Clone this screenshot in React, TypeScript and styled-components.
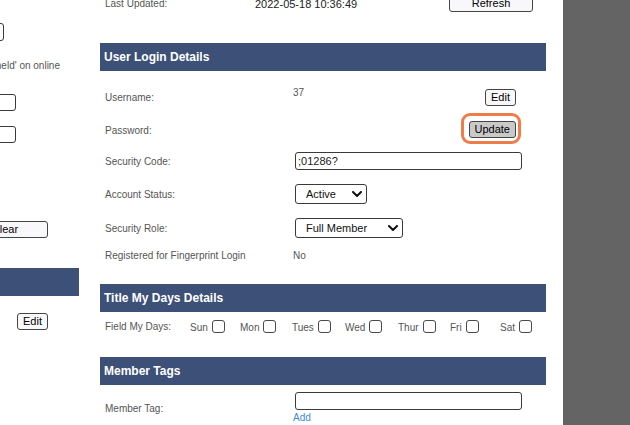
import React from "react";
import styled, { createGlobalStyle } from "styled-components";

const GlobalStyle = createGlobalStyle`
  html, body { margin: 0; padding: 0; background: #fff; }
  body { font-family: "Liberation Sans", Arial, sans-serif; overflow: hidden; }
`;

const Page = styled.div`
  display: flex;
  width: 630px;
  height: 425px;
  overflow: hidden;
`;

const Content = styled.div`
  flex: 0 0 563px;
  display: flex;
  gap: 21px;
  background: #fff;
  overflow: hidden;
`;

const SideGutter = styled.div`
  flex: 1;
  background: #646464;
`;

const LeftColumn = styled.div`
  flex: 0 0 79px;
  overflow: hidden;
  display: flex;
  justify-content: flex-end;
`;

const LeftInner = styled.div`
  flex: 0 0 220px;
  display: flex;
  flex-direction: column;
  align-items: flex-end;
`;

const Main = styled.div`
  flex: 0 0 446px;
  display: flex;
  flex-direction: column;
`;

const TopRow = styled.div`
  margin-top: -13px;
  height: 32px;
  display: grid;
  grid-template-columns: 150px 1fr auto;
  align-items: center;
  padding: 0 13px 0 5px;
`;

const Label = styled.span`
  font-size: 10px;
  line-height: 12px;
  padding-top: 2px;
  color: #555;
  white-space: nowrap;
`;

const ValueText = styled.span<{ $dark?: boolean; $size?: number }>`
  font-size: ${(p) => p.$size ?? 10}px;
  line-height: 12px;
  padding-top: 2px;
  color: ${(p) => (p.$dark ? "#222" : "#555")};
  white-space: nowrap;
`;

const Note = styled(Label)<{ $mt: number; $mr: number }>`
  margin-top: ${(p) => p.$mt}px;
  margin-right: ${(p) => p.$mr}px;
`;

const SectionHeader = styled.div<{ $mt: number }>`
  margin-top: ${(p) => p.$mt}px;
  height: 28px;
  flex: 0 0 28px;
  align-self: stretch;
  background: #3d5077;
  color: #fff;
  font-size: 12px;
  font-weight: bold;
  display: flex;
  align-items: center;
  padding-left: 4px;
  white-space: nowrap;
`;

const Button = styled.button<{ $pressed?: boolean; $width?: number; $mt?: number; $mr?: number }>`
  font-family: "Liberation Sans", Arial, sans-serif;
  font-size: 11px;
  line-height: 13px;
  color: #000;
  height: 17px;
  padding: 0 5px;
  ${(p) => (p.$width ? `width: ${p.$width}px;` : "")}
  margin: ${(p) => p.$mt ?? 0}px ${(p) => p.$mr ?? 0}px 0 0;
  border: 1px solid #454545;
  border-radius: 3px;
  background: ${(p) => (p.$pressed ? "#c9c9c9" : "#f8f8fb")};
  flex: 0 0 auto;
  white-space: nowrap;
`;

const TextInput = styled.input<{ $width: number; $height?: number; $mt?: number; $mr?: number; $ml?: number }>`
  box-sizing: border-box;
  width: ${(p) => p.$width}px;
  height: ${(p) => p.$height ?? 18}px;
  margin: ${(p) => p.$mt ?? 0}px ${(p) => p.$mr ?? 0}px 0 ${(p) => p.$ml ?? 0}px;
  padding: 0 2px;
  border: 1px solid #3a3a3a;
  border-radius: 3px;
  background: #fff;
  font-family: "Liberation Sans", Arial, sans-serif;
  font-size: 11px;
  color: #222;
  flex: 0 0 auto;
  outline: none;
`;

const DetailRows = styled.div`
  padding-top: 10px;
  display: flex;
  flex-direction: column;
`;

const Row = styled.div<{ $h: number }>`
  height: ${(p) => p.$h}px;
  display: grid;
  grid-template-columns: 188px 1fr;
  padding: 0 24px 0 5px;
`;

const Cell = styled.div`
  display: flex;
  align-items: center;
  justify-content: space-between;
  min-width: 0;
`;

const TopValue = styled(ValueText)`
  align-self: flex-start;
  padding-top: 6px;
`;

const ActionSlot = styled.div`
  margin-right: 6px;
  display: flex;
`;

const Highlight = styled.span`
  position: relative;
  display: inline-flex;
  &::after {
    content: "";
    position: absolute;
    top: -8px;
    bottom: -6px;
    left: -8px;
    right: -5px;
    border: 3px solid #ef7d4a;
    border-radius: 9px;
    pointer-events: none;
  }
`;

const SelectWrap = styled.span`
  position: relative;
  display: inline-flex;
  margin-left: 2px;
`;

const Select = styled.select<{ $width: number }>`
  appearance: none;
  -webkit-appearance: none;
  box-sizing: border-box;
  width: ${(p) => p.$width}px;
  height: 20px;
  border: 1px solid #3a3a3a;
  border-radius: 3px;
  background: #fff;
  padding: 0 0 0 10px;
  font-family: "Liberation Sans", Arial, sans-serif;
  font-size: 11px;
  color: #111;
  outline: none;
`;

const Chevron = styled.svg`
  position: absolute;
  right: 5px;
  top: 7px;
  pointer-events: none;
`;

const DaysRow = styled.div`
  height: 28px;
  display: grid;
  grid-template-columns: 85px 1fr;
  align-items: center;
  padding-left: 5px;
`;

const DaysGrid = styled.div`
  display: grid;
  grid-template-columns: 50px 52px 53px 53px 52px 50px auto;
  align-items: center;
`;

const Day = styled.label`
  display: inline-flex;
  align-items: flex-end;
  gap: 4px;
  font-size: 10px;
  line-height: 12px;
  color: #555;
`;

const DayName = styled.span`
  position: relative;
  top: 1px;
`;

const Checkbox = styled.input`
  appearance: none;
  -webkit-appearance: none;
  box-sizing: border-box;
  width: 13px;
  height: 13px;
  margin: 0;
  border: 1px solid #4a4a4a;
  border-radius: 3px;
  background: #fff;
`;

const TagRow = styled.div`
  padding: 7px 0 0 5px;
  display: grid;
  grid-template-columns: 188px 1fr;
`;

const Stack = styled.div`
  display: flex;
  flex-direction: column;
  align-items: flex-start;
`;

const LinkText = styled.a`
  margin-top: 2px;
  font-size: 10px;
  line-height: 12px;
  color: #3a8ad8;
  text-decoration: none;
`;

const ChevronIcon = () => (
  <Chevron width="10" height="7" viewBox="0 0 10 7">
    <polyline points="1,1 5,5 9,1" fill="none" stroke="#111" strokeWidth="2" strokeLinecap="round" strokeLinejoin="round" />
  </Chevron>
);

const days = ["Sun", "Mon", "Tues", "Wed", "Thur", "Fri", "Sat"];

export default function App() {
  return (
    <>
      <GlobalStyle />
      <Page>
        <Content>
          <LeftColumn>
            <LeftInner>
              <TextInput $width={60} $height={18} $mt={23} $mr={75} readOnly />
              <Note $mt={17} $mr={19}>Show as 'held' on online</Note>
              <TextInput $width={80} $height={17} $mt={22} $mr={63} readOnly />
              <TextInput $width={80} $height={17} $mt={15} $mr={63} readOnly />
              <Button $width={86} $mt={78} $mr={31}>Clear</Button>
              <SectionHeader $mt={30}>Member Details</SectionHeader>
              <Button $mt={17} $mr={31}>Edit</Button>
            </LeftInner>
          </LeftColumn>
          <Main>
            <TopRow>
              <Label>Last Updated:</Label>
              <ValueText $dark $size={11}>2022-05-18 10:36:49</ValueText>
              <Button $width={84}>Refresh</Button>
            </TopRow>

            <SectionHeader $mt={24}>User Login Details</SectionHeader>
            <DetailRows>
              <Row $h={32}>
                <Cell><Label>Username:</Label></Cell>
                <Cell>
                  <TopValue>37</TopValue>
                  <ActionSlot><Button>Edit</Button></ActionSlot>
                </Cell>
              </Row>
              <Row $h={33}>
                <Cell><Label>Password:</Label></Cell>
                <Cell>
                  <span />
                  <ActionSlot>
                    <Highlight><Button $pressed>Update</Button></Highlight>
                  </ActionSlot>
                </Cell>
              </Row>
              <Row $h={30}>
                <Cell><Label>Security Code:</Label></Cell>
                <Cell>
                  <TextInput $width={227} $ml={2} defaultValue=";01286?" />
                </Cell>
              </Row>
              <Row $h={36}>
                <Cell><Label>Account Status:</Label></Cell>
                <Cell>
                  <SelectWrap>
                    <Select $width={72} defaultValue="Active">
                      <option>Active</option>
                      <option>Inactive</option>
                    </Select>
                    <ChevronIcon />
                  </SelectWrap>
                </Cell>
              </Row>
              <Row $h={32}>
                <Cell><Label>Security Role:</Label></Cell>
                <Cell>
                  <SelectWrap>
                    <Select $width={108} defaultValue="Full Member">
                      <option>Full Member</option>
                      <option>Administrator</option>
                    </Select>
                    <ChevronIcon />
                  </SelectWrap>
                </Cell>
              </Row>
              <Row $h={22}>
                <Cell><Label>Registered for Fingerprint Login</Label></Cell>
                <Cell><ValueText>No</ValueText></Cell>
              </Row>
            </DetailRows>

            <SectionHeader $mt={18}>Title My Days Details</SectionHeader>
            <DaysRow>
              <Label>Field My Days:</Label>
              <DaysGrid>
                {days.map((d) => (
                  <Day key={d}>
                    <DayName>{d}</DayName>
                    <Checkbox type="checkbox" />
                  </Day>
                ))}
              </DaysGrid>
            </DaysRow>

            <SectionHeader $mt={17}>Member Tags</SectionHeader>
            <TagRow>
              <Cell><Label>Member Tag:</Label></Cell>
              <Stack>
                <TextInput $width={227} $ml={2} />
                <LinkText href="#">Add</LinkText>
              </Stack>
            </TagRow>
          </Main>
        </Content>
        <SideGutter />
      </Page>
    </>
  );
}
